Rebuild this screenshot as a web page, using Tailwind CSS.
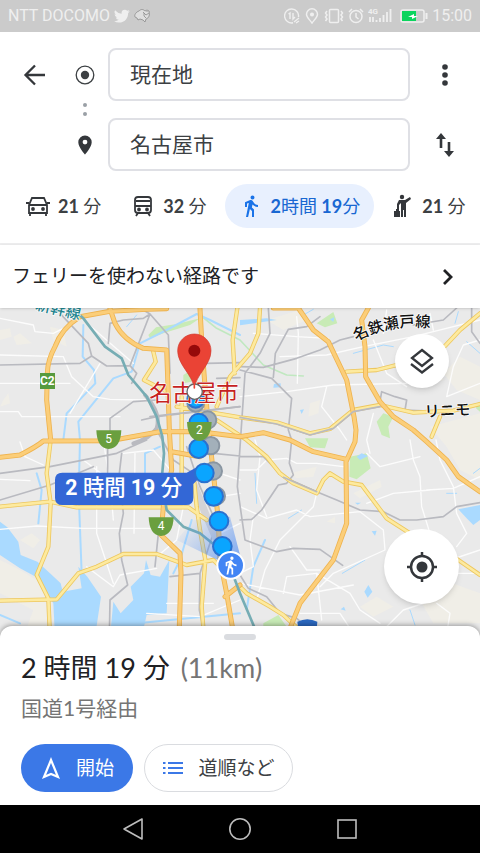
<!DOCTYPE html>
<html lang="ja">
<head>
    <meta charset="UTF-8">
    <meta name="viewport" content="width=device-width, initial-scale=1">
    <title>経路 - 名古屋市</title>
    <script src="https://cdn.jsdelivr.net/npm/@tailwindcss/browser@4"></script>
</head>
<body class="min-h-screen flex flex-col bg-white text-[#202124] font-['Lato','Noto_Sans_CJK_JP',sans-serif]">

    <!-- Barra de estado -->
    <div class="h-8 shrink-0 bg-[#cbcbcb] text-[#efefef] flex items-center justify-between px-2 font-['Roboto',sans-serif] text-base">
        <div class="flex items-center gap-1">
            <span>NTT DOCOMO</span>
            <svg class="w-4 h-4" viewBox="0 0 24 24" fill="currentColor"><path d="M23.6 4.9a9.6 9.6 0 0 1-2.8.8 4.9 4.9 0 0 0 2.1-2.7 9.700 9.700 0 0 1-3.100 1.200 4.850 4.850 0 0 0-8.300 4.400A13.800 13.800 0 0 1 1.600 3.500a4.850 4.850 0 0 0 1.500 6.500 4.800 4.800 0 0 1-2.200-.6v.1a4.850 4.850 0 0 0 3.900 4.700 4.900 4.900 0 0 1-2.200.1 4.850 4.850 0 0 0 4.500 3.400A9.700 9.700 0 0 1 0 19.700a13.700 13.700 0 0 0 7.400 2.200c8.900 0 13.800-7.400 13.800-13.800v-.6a9.800 9.800 0 0 0 2.400-2.600z"/></svg>
            <svg class="w-4 h-4" viewBox="0 0 16 16" fill="#dedede" stroke="#8c8c8c" stroke-width=".8"><path d="M5 3C2 4 0 7 1 9l2 1 1 2 2-1 3 1 2 2 1-3c3-1 4-4 3-8l-2-1-2 1C9 1 7 1 5 3z"/><path d="M9 4l3 3 3-2M10 5v3l2 2M13 3v1" fill="none"/></svg>
        </div>
        <div class="flex items-center gap-1">
            <svg class="w-4 h-4" viewBox="0 0 16 16" fill="none" stroke="currentColor" stroke-width="1.400"><path d="M14.500 9A7 7 0 1 0 9 14.800M4.500 6L6 5v6M9 5v6l2-2M10 14l5-4M12 15l3-2"/></svg>
            <svg class="w-4 h-4" viewBox="0 0 16 16" fill="none" stroke="currentColor" stroke-width="1.500"><path d="M8 15C5 11 2.500 9 2.500 6.300a5.500 5.500 0 0 1 11 0C13.500 9 11 11 8 15z"/><circle cx="8" cy="6.500" r="1.300" fill="currentColor"/></svg>
            <svg class="w-5 h-4" viewBox="0 0 20 16" fill="none" stroke="currentColor" stroke-width="1.500"><rect x="5.500" y="1.500" width="9" height="13" rx="1"/><path d="M3 3L1.500 5 3 7 1.500 9 3 11l-1.500 2M17 3l1.500 2L17 7l1.500 2-1.500 2 1.500 2"/></svg>
            <svg class="w-4 h-4" viewBox="0 0 16 16" fill="none" stroke="currentColor" stroke-width="1.500"><circle cx="8" cy="8.500" r="6"/><path d="M8 5v4l2.500 2M1 4l3-3M15 4l-3-3"/></svg>
            <svg class="w-6 h-4" viewBox="0 0 24 16"><text x="0" y="6" font-size="8" font-weight="700" fill="currentColor">4G</text><path d="M2 9v5M5 9v5M8.500 14v-2M12 14v-4M15.500 14V7M19 14V4M22.500 14V1" stroke="currentColor" stroke-width="1.800"/></svg>
            <svg class="ml-1 w-7 h-4" viewBox="0 0 28 16"><rect x="1" y="2" width="23" height="12" rx="2" fill="none" stroke="currentColor" stroke-width="1.500"/><rect x="2" y="3" width="14" height="10" fill="#0bd45d"/><path d="M8 9l6-3v2h4l-6 3V9z" fill="#fff"/><path d="M26.500 5v6" stroke="currentColor" stroke-width="2"/></svg>
            <span>15:00</span>
        </div>
    </div>

    <header class="shrink-0 pt-4 border-b-2 border-[#ededee]">
        <div class="grid grid-cols-[54px_46px_1fr_70px] grid-rows-[53px_17px_53px] items-center justify-items-center pl-2">
            <button type="button" aria-label="戻る">
                <svg class="w-6 h-6" viewBox="0 0 24 24" fill="none" stroke="#34373b" stroke-width="2.300"><path d="M22 12H2M12 2.500L2.500 12l9.500 9.500"/></svg>
            </button>
            <svg class="w-5 h-5" viewBox="0 0 20 20"><circle cx="10" cy="10" r="8.800" fill="none" stroke="#3c4043" stroke-width="1.300"/><circle cx="10" cy="10" r="4.200" fill="#3c4043"/></svg>
            <input type="text" aria-label="出発地" value="現在地" class="w-full h-full min-w-0 rounded-lg border-2 border-[#dfe0e5] px-5 pb-1 text-[21px] text-[#3c4043]">
            <button type="button" aria-label="メニュー">
                <svg class="w-6 h-6" viewBox="0 0 24 24" fill="#34373b"><circle cx="12" cy="4" r="2.800"/><circle cx="12" cy="12" r="2.800"/><circle cx="12" cy="20" r="2.800"/></svg>
            </button>

            <svg class="col-start-2 row-start-2 w-2 h-4" viewBox="0 0 8 16" fill="#9aa0a6"><circle cx="4" cy="3" r="2"/><circle cx="4" cy="12" r="2"/></svg>

            <svg class="col-start-2 row-start-3 w-5 h-5" viewBox="0 0 20 20" fill="#34373b"><path fill-rule="evenodd" d="M10 .5a6.700 6.700 0 0 0-6.700 6.700C3.300 12 10 19.500 10 19.500S16.700 12 16.700 7.200A6.700 6.700 0 0 0 10 .5zm0 9a2.400 2.400 0 1 1 0-4.800 2.400 2.400 0 0 1 0 4.800z"/></svg>
            <input type="text" aria-label="目的地" value="名古屋市" class="col-start-3 row-start-3 w-full h-full min-w-0 rounded-lg border-2 border-[#dfe0e5] px-5 pb-1 text-[21px] text-[#3c4043]">
            <button type="button" aria-label="入れ替え" class="col-start-4 row-start-3">
                <svg class="w-6 h-6" viewBox="0 0 24 24" fill="none" stroke="#34373b" stroke-width="2.600"><path d="M8 15V3M16 9v12"/><path d="M3 6l5-6 5 6zM11 18l5 6 5-6z" fill="#34373b" stroke="none"/></svg>
            </button>
        </div>

        <!-- Modos de transporte -->
        <nav class="flex items-center pl-2.5 pt-3 pb-3.5 h-[72px] overflow-hidden whitespace-nowrap text-lg font-bold text-[#3c4043]">
            <button type="button" class="flex items-center shrink-0 gap-2 h-11 px-4">
                <svg class="w-6 h-6" viewBox="0 0 24 24" fill="none" stroke="#34373b" stroke-width="1.800"><path d="M3 11l3-7h12l3 7v8H3zM3 11h18M0 9h3M21 9h3M4 19v3M20 19v3"/><circle cx="7" cy="15" r="1" fill="#34373b"/><circle cx="17" cy="15" r="1" fill="#34373b"/></svg>
                <span>21 <span class="font-normal">分</span></span>
            </button>
            <button type="button" class="flex items-center shrink-0 gap-2 h-11 px-3.5">
                <svg class="w-6 h-6" viewBox="0 0 24 24" fill="none" stroke="#34373b" stroke-width="1.800"><rect x="4" y="3" width="16" height="16" rx="3"/><path d="M4 12h16M5 7h14M7 19l-2 3M17 19l2 3"/><circle cx="8" cy="15.500" r="1" fill="#34373b"/><circle cx="16" cy="15.500" r="1" fill="#34373b"/></svg>
                <span>32 <span class="font-normal">分</span></span>
            </button>
            <button type="button" class="ml-1 flex items-center shrink-0 gap-2 h-11 px-3.5 rounded-full bg-[#e8f0fe] text-[#1967d2]">
                <svg class="w-6 h-6" viewBox="0 0 24 24" fill="#1a73e8"><path d="M13.500 5.500a2 2 0 1 0 0-4 2 2 0 0 0 0 4zM9.800 8.900L7 23h2.100l1.800-8 2.100 2v6h2v-7.500l-2.100-2 .6-3C14.800 12 16.800 13 19 13v-2c-1.900 0-3.500-1-4.300-2.400l-1-1.600c-.4-.6-1-1-1.700-1-.3 0-.5.1-.8.1L6 8.300V13h2V9.600l1.800-.7"/></svg>
                <span>2<span class="font-normal">時間</span> 19<span class="font-normal">分</span></span>
            </button>
            <button type="button" class="flex items-center shrink-0 gap-2 h-11 px-4">
                <svg class="w-6 h-6" viewBox="0 0 24 24" fill="#34373b"><circle cx="12" cy="3" r="2.200"/><path d="M9 6h6l5-3 1 2-5 4v14h-2v-7h-1v7h-2V9L9 11v4H7v-5zM4 17h6v6H4zM6 15h3v2H6z"/></svg>
                <span>21 <span class="font-normal">分</span></span>
            </button>
        </nav>
    </header>

    <button type="button" class="relative z-10 shrink-0 h-[63px] px-3 flex items-center justify-between bg-white text-[19px] text-left shadow">
        <span>フェリーを使わない経路です</span>
        <svg class="mr-2 w-6 h-6" viewBox="0 0 24 24" fill="none" stroke="#202124" stroke-width="2.800"><path d="M8 5l7 7-7 7"/></svg>
    </button>

    <!-- Mapa -->
    <main class="relative flex-1 min-h-[330px] bg-[#eaeaea]">
        <svg class="absolute inset-0 w-full h-full" viewBox="0 204 1440 990" preserveAspectRatio="xMidYMid slice" fill="none" stroke-linejoin="round" stroke-linecap="round">
            <defs>
                <path id="orange" d="M500 206L440 208L330 214L240 230Q185 265 165 320Q143 360 142 400L140 480L152 600M330 206L345 250Q370 300 430 325L500 330L504 440L508 570L515 690L490 800L483 885L540 940L543 1000L537 1190M600 206L605 300L612 400L625 560L640 700L655 840L660 960L680 1060L702 1190M0 652L60 645Q110 620 130 603L330 602L480 575L600 575L720 590L790 578L870 600L940 635L1040 658M820 204H895L940 270L985 305L1040 420L1062 530L1068 570L1065 605L1038 665L1040 850L1000 960L900 1090L860 1190M1105 204L1085 240L1095 320L1097 410L1140 485L1180 530L1240 570L1280 605L1340 660L1375 710L1440 755M720 1035L675 1070M515 635L600 650"/>
                <path id="yellow" d="M152 600L140 700L152 790L145 920L110 1005L145 1075L150 1190M0 800L150 785L230 802L565 802L620 840M0 1082L170 1078L235 1000L290 980L370 942L470 942L560 975L640 960L680 1000M545 470V700M580 700L590 800L600 870L616 960L605 1100L612 1190M460 335L467 365L432 420L500 455M712 204L698 300L704 400M780 204L775 280L750 340L690 410L650 500M530 500L720 532L830 547L930 580L990 567L1060 510L1140 495L1240 518L1360 512L1440 492M650 540L740 600M1040 395L1130 390L1210 370M1335 318L1380 270L1440 220M740 600L800 650L840 700L880 730L950 760L970 720L990 700L1030 725L1085 735L1160 835L1230 880L1375 960L1440 1005M720 1040L740 1060L810 1100L850 1125L920 1190M1320 530L1295 590"/>
                <path id="seto" d="M1068 304Q1180 245 1320 266"/>
                <linearGradient id="beam" x1="1" y1="1" x2="0" y2=".3"><stop offset="0" stop-color="#4285f4" stop-opacity=".7"/><stop offset="1" stop-color="#4285f4" stop-opacity="0"/></linearGradient>
            </defs>

            <!-- zonas claras -->
            <path fill="#f0eee7" d="M0 960L50 985L110 1020L155 1080L150 1190H70L100 1110L0 1060zM60 900L95 880L120 900L100 925zM0 270L30 265L35 290L0 300zM150 260L190 270L200 320L160 300zM40 290L60 280L95 310L50 315zM10 480L25 460L30 490L0 500zM400 1060L430 1010L445 1050L410 1080zM1330 400L1380 350L1440 380V480L1370 450zM1290 560L1440 520V720L1380 690L1340 620zM1220 340L1300 320L1330 420L1250 440zM930 490L960 480L955 520L925 530zM870 700L950 680L940 710L890 715zM1060 760L1140 720L1145 740L1080 775zM1260 1080L1330 1020L1440 1060V1150H1300zM1080 1100L1130 1070L1180 1100L1120 1130zM980 845L1005 830V850zM800 240L900 210L920 240L850 270z"/>
            <!-- parques -->
            <path fill="#c8ebb6" d="M445 285L468 262L530 252L600 235L570 255L490 280L450 295zM550 405L570 392L575 425L550 430zM950 250L1000 216L1012 250L975 262zM1130 545L1150 520L1180 530L1165 560L1170 595L1145 585zM1050 650L1100 640L1112 685L1070 718L1048 710zM915 595H985L975 625L930 622zM790 1150L835 1125L860 1160L850 1190H790zM1430 490L1440 485V515L1428 505z"/>
            <path stroke="#c0e8c0" stroke-width="5" d="M600 225L650 265L720 300L790 375L860 405L910 408"/>
            <!-- agua -->
            <g fill="#aadaff">
                <path d="M0 845L22 862L55 905L62 945L112 965L150 1000L182 1030L188 1055L245 1045L235 980L262 1010L303 1070L285 1190H165L160 1090L110 1012L60 985L0 945z"/>
                <path d="M392 1040L432 1000L438 960L452 1005L480 1010L508 960L500 1120L440 1125L425 1190H330L340 1085L362 1120L400 1080z"/>
                <path d="M1375 808L1440 795V840L1420 855L1400 835zM822 432L842 430V442L820 443zM900 510L912 508L905 522zM1115 874L1130 872L1125 887zM1093 1055L1105 1035L1117 1055L1103 1073zM1022 1108L1032 1100L1037 1112zM1070 650L1085 640L1104 648L1080 660zM720 240L800 235L830 240L720 256zM990 238L1003 232L1000 246zM1065 788H1083L1073 794z"/>
            </g>
            <path stroke="#aadaff" stroke-width="6" d="M250 255L248 350L282 390L286 430L200 520L190 600M395 395L340 415L235 545L240 600L236 760L245 1000M395 395L420 310L500 270L590 222L630 240L720 285M435 700V640L480 620M575 840L540 960L520 1000M740 1110L760 980L795 900M0 1125L60 1150M410 1150L720 1120M115 850L125 750L110 700"/>
            <path stroke="#aadaff" stroke-width="3" d="M410 225L380 260M765 700L770 790M865 835L905 810M1027 1000L1095 960M1400 305L1440 340M1060 340L1150 315L1180 320M1340 760H1370M1420 700L1440 685M1230 1110L1245 1155M1375 215L1365 250M910 225L940 208"/>

            <!-- calles -->
            <path stroke="#fcfcfc" stroke-width="4" d="M0 235L100 255L105 275L160 280L220 250M0 345L190 350L215 410L280 470L330 478L440 480M300 370L210 520M250 240L400 370M0 515L55 515L65 530L360 530M0 430H210M60 606L75 650L130 675M0 718L90 722M0 868L110 858L250 865L480 865M290 680V880L340 1030M405 640L402 880M250 660L330 720L340 840M335 760H400M310 600L325 700M370 640L460 630L520 700M260 980L340 1040L360 1005L470 985M440 1120L600 1130L720 1080M500 1090H640M600 440L720 445M600 500V560M560 740L660 700L720 720M660 770L720 760M640 890L720 850M520 700L560 750L530 900L470 950M890 230L895 280L892 430M760 280L890 290L985 295M720 470L860 455L1000 435L1220 430M840 350L980 345L1090 320L1240 290L1440 240M980 440L965 500L1020 570L1040 600M1120 300L1160 400L1220 440M1160 210L1150 280M1290 220L1300 270M1440 300L1390 315L1360 380L1340 470L1440 430M1120 520L1100 600L1110 640M720 690H770L800 660L860 655L890 670H950L1030 680M765 600L780 650L770 750L800 830M720 800L800 835L890 810L930 830L1080 815M950 760L940 800L840 900L795 990L770 1080M760 830L750 900L760 980L720 1000M1100 640L1140 680L1260 650M1230 600L1240 660L1260 710L1265 800L1290 880M1308 600L1320 660L1360 740L1370 820L1400 880L1370 920M1080 815L1150 870L1155 930L1000 1000L960 1040M850 1060L860 1010L950 1000L1050 1060L1080 1110L1140 1150M720 1030L900 1065L1060 1035M950 1000L965 1140M870 920L920 990H960M900 1120H1020L1060 1180M1140 1180L1210 1110L1300 1080M1310 1090L1350 1120L1340 1180M1290 750L1180 760L1100 790M1350 960L1440 930M1360 1000H1440M1280 750L1360 745L1440 710"/>

            <!-- trenes -->
            <path stroke="#b9bac0" stroke-width="5" d="M0 375L240 370L275 348L320 378L390 377L450 222L505 285L510 400M180 220L265 310L275 348M325 310L330 250L370 240L430 235L450 222L420 204M390 377L410 400L395 430M330 600V535L400 485L470 480M0 700L150 680L350 640L440 600M0 780L150 735L280 680M323 620V750M365 640L358 700L370 820L358 880L365 960L383 1035L330 1080L328 1190M425 540L470 530L720 500M620 370L720 368M650 415L720 413M720 390L815 415L875 475L865 570L875 600L868 670L880 705L860 730L835 735L785 810L755 838L720 840M720 380L790 382L890 355L960 330L1020 300L1060 290M820 412L826 340L865 268L920 260L960 230M805 204L810 280L780 340L735 400L712 740L735 900L830 935L880 925L960 928L1028 976M720 650L790 650L850 710L950 755L1010 780L1080 810L1150 815L1200 840H1250L1330 830L1370 800L1440 788M1140 485L1145 455L1185 470L1220 480L1215 510L1360 516M1415 204V275L1440 310M1240 255L1330 240L1370 204M560 620L600 740L650 850L600 1000L598 1110L615 1190M465 980L475 880M510 1010L600 1000M720 1005L745 1045L800 1070L840 1120L890 1135L920 1160M640 640L720 648M470 570L520 660L580 700"/>
            <path stroke="#b9bac0" stroke-width="12" d="M435 465Q485 520 470 565Q450 595 400 610"/>
            <path stroke="#d3d3d6" stroke-width="22" d="M580 730L620 830L650 900"/>

            <use href="#yellow" stroke="#edc75f" stroke-width="13"/>
            <use href="#yellow" stroke="#fdea9f" stroke-width="8"/>
            <use href="#orange" stroke="#efb34e" stroke-width="15"/>
            <use href="#orange" stroke="#fbce7a" stroke-width="10"/>
            <path stroke="#b9bac0" stroke-width="5" d="M450 530L720 500M720 532L830 552L930 585L1000 565L1060 515L1140 500M850 712L950 755"/>
            <path stroke="#76adb4" stroke-width="8" d="M215 204L250 235L315 320L365 355L385 405L440 470L470 530L487 590L492 640L485 720L500 810L550 860L600 880L650 920L690 980L720 1060L775 1190"/>

            <!-- señales de ruta -->
            <rect x="120" y="399" width="45" height="48" fill="#579a3e"/>
            <g fill="#6a9f3f">
                <path d="M289 571H364Q362 625 326 627Q291 625 289 571zM446 832H521Q519 886 483 888Q448 886 446 832z"/>
            </g>
            <g fill="#fff" text-anchor="middle" class="font-['Roboto',sans-serif]">
                <text x="142" y="436" font-size="36" font-weight="700">C2</text>
                <text x="326" y="608" font-size="36">5</text>
                <text x="483" y="869" font-size="36">4</text>
            </g>
            <path fill="#2b68c0" d="M892 1145Q922 1130 952 1145L948 1190H898z"/>

            <!-- textos del mapa -->
            <g font-size="46" font-weight="500" stroke="#fff" stroke-width="4" paint-order="stroke" class="font-['Noto_Sans_CJK_JP',sans-serif]">
                <text transform="translate(104 208) rotate(13)" fill="#23858f">新幹線</text>
                <text fill="#111"><textPath href="#seto">名鉄瀬戸線</textPath></text>
                <text transform="translate(1274 531) rotate(-3)" fill="#111">リニモ</text>
            </g>

            <!-- ruta a pie -->
            <path fill="url(#beam)" d="M690 978L530 900L580 840L690 830L724 960z"/>
            <g fill="#a3b0ba" stroke="#8a96a2" stroke-width="6">
                <circle cx="587" cy="490" r="25"/><circle cx="623" cy="540" r="26"/><circle cx="632" cy="617" r="26"/><circle cx="640" cy="693" r="26"/><circle cx="649" cy="768" r="26"/>
            </g>
            <g fill="#0aa5ff" stroke="#2a71cf" stroke-width="6">
                <circle cx="587" cy="478" r="25"/><circle cx="596" cy="549" r="28"/><circle cx="596" cy="626" r="28"/>
                <circle cx="641" cy="769" r="28"/><circle cx="657" cy="843" r="28"/><circle cx="667" cy="919" r="28"/>
            </g>
            <path fill="#6a9f3f" d="M561 546H635Q633 599 598 603Q563 599 561 546z"/>
            <text x="598" y="583" font-size="36" fill="#fff" text-anchor="middle" class="font-['Roboto',sans-serif]">2</text>
            <text x="448" y="484" font-size="67" fill="#c5221f" stroke="#fff" stroke-width="4" paint-order="stroke" class="font-['Noto_Sans_CJK_JP',sans-serif]">名古屋市</text>
            <path fill="#3367d6" d="M187 698H560L604 674L612 700L580 732V773Q580 795 558 795H187Q165 795 165 773V720Q165 698 187 698z"/>
            <circle cx="613" cy="699" r="28" fill="#0aa5ff" stroke="#2a71cf" stroke-width="6"/>
            <text x="196" y="764" font-size="64" font-weight="700" fill="#fff" class="font-['Roboto','Noto_Sans_CJK_JP',sans-serif]">2 <tspan font-weight="500">時間</tspan> 19 <tspan font-weight="500">分</tspan></text>

            <circle cx="692" cy="976" r="40" fill="#4285f4" stroke="#fff" stroke-width="6"/>
            <path transform="translate(662 946) scale(2.500)" fill="#fff" d="M13.500 5.500a2 2 0 1 0 0-4 2 2 0 0 0 0 4zM9.800 8.900L7 23h2.100l1.800-8 2.100 2v6h2v-7.500l-2.100-2 .6-3C14.800 12 16.800 13 19 13v-2c-1.900 0-3.500-1-4.300-2.400l-1-1.600c-.4-.6-1-1-1.700-1-.3 0-.5.1-.8.1L6 8.300V13h2V9.600l1.800-.7"/>

            <path fill="#ea4335" stroke="#d03a2e" stroke-width="2" d="M583 445C579 405 533 375 533 332A50 50 0 0 1 633 332C633 375 587 405 583 445z"/>
            <circle cx="583" cy="332" r="18" fill="#960a0a"/>
            <circle cx="584" cy="455" r="23" fill="#fff" stroke="#666" stroke-width="4"/>
            <path stroke="#ea4335" stroke-width="5" d="M583 425V444"/>
        </svg>

        <button type="button" aria-label="レイヤ" class="absolute top-[26px] right-[31px] w-[54px] h-[54px] rounded-full bg-white shadow-md flex items-center justify-center">
            <svg class="w-7 h-7" viewBox="0 0 28 28" fill="none" stroke="#34373b" stroke-width="2.300"><path d="M14 3l10 8-10 8-10-8zM3 17l11 8.500L25 17"/></svg>
        </button>
        <button type="button" aria-label="現在地を表示" class="absolute bottom-[34px] right-[21px] w-[75px] h-[75px] rounded-full bg-white shadow-md flex items-center justify-center">
            <svg class="w-8 h-8" viewBox="0 0 32 32" fill="none" stroke="#34373b" stroke-width="2.500"><circle cx="16" cy="16" r="11"/><circle cx="16" cy="16" r="5.500" fill="#34373b" stroke="none"/><path d="M16 1v4M16 27v4M1 16h4M27 16h4"/></svg>
        </button>
    </main>

    <section class="relative z-10 -mt-3 shrink-0 bg-white rounded-t-xl px-[21px] pt-2 pb-[13px] shadow-[0_-1px_5px_rgba(0,0,0,0.35)]">
        <div class="mx-auto w-8 h-1.5 rounded-full bg-[#dadce0]"></div>
        <h1 class="mt-2 text-[27px] leading-10">2 時間 19 分 <span class="ml-1 text-[#757575]">(11km)</span></h1>
        <p class="mt-1 text-[21px] leading-8 text-[#757575]">国道1号経由</p>
        <div class="mt-5 flex gap-[11px] text-[19px]">
            <button type="button" class="w-28 h-12 rounded-full bg-[#3b78e7] text-white flex items-center justify-center gap-3">
                <svg class="w-6 h-6" viewBox="0 0 24 24" fill="none" stroke="#fff" stroke-width="2.200"><path d="M11 4l7 17-7-3-7 3z"/></svg>
                開始
            </button>
            <button type="button" class="w-[149px] h-12 rounded-full border border-[#dadce0] text-[#3c4043] flex items-center justify-center gap-3">
                <svg class="w-6 h-6" viewBox="0 0 24 24" stroke="#3b78e7" stroke-width="2.200"><path d="M6 7h15M6 12h15M6 17h15M1 7h2.500M1 12h2.500M1 17h2.500"/></svg>
                道順など
            </button>
        </div>
    </section>

    <!-- Botones de Android -->
    <footer class="relative z-10 shrink-0 h-12 bg-black flex items-center justify-center gap-[83px]">
        <button type="button" aria-label="戻る"><svg class="w-6 h-6" viewBox="0 0 24 24" fill="none" stroke="#bdbdbd" stroke-width="1.600" stroke-linejoin="round"><path d="M21 2v20L3 12z"/></svg></button>
        <button type="button" aria-label="ホーム"><svg class="w-6 h-6" viewBox="0 0 24 24" fill="none" stroke="#bdbdbd" stroke-width="1.600"><circle cx="12" cy="12" r="10.200"/></svg></button>
        <button type="button" aria-label="履歴"><svg class="w-6 h-6" viewBox="0 0 24 24" fill="none" stroke="#bdbdbd" stroke-width="1.600"><rect x="3" y="3" width="18" height="18"/></svg></button>
    </footer>
</body>
</html>
